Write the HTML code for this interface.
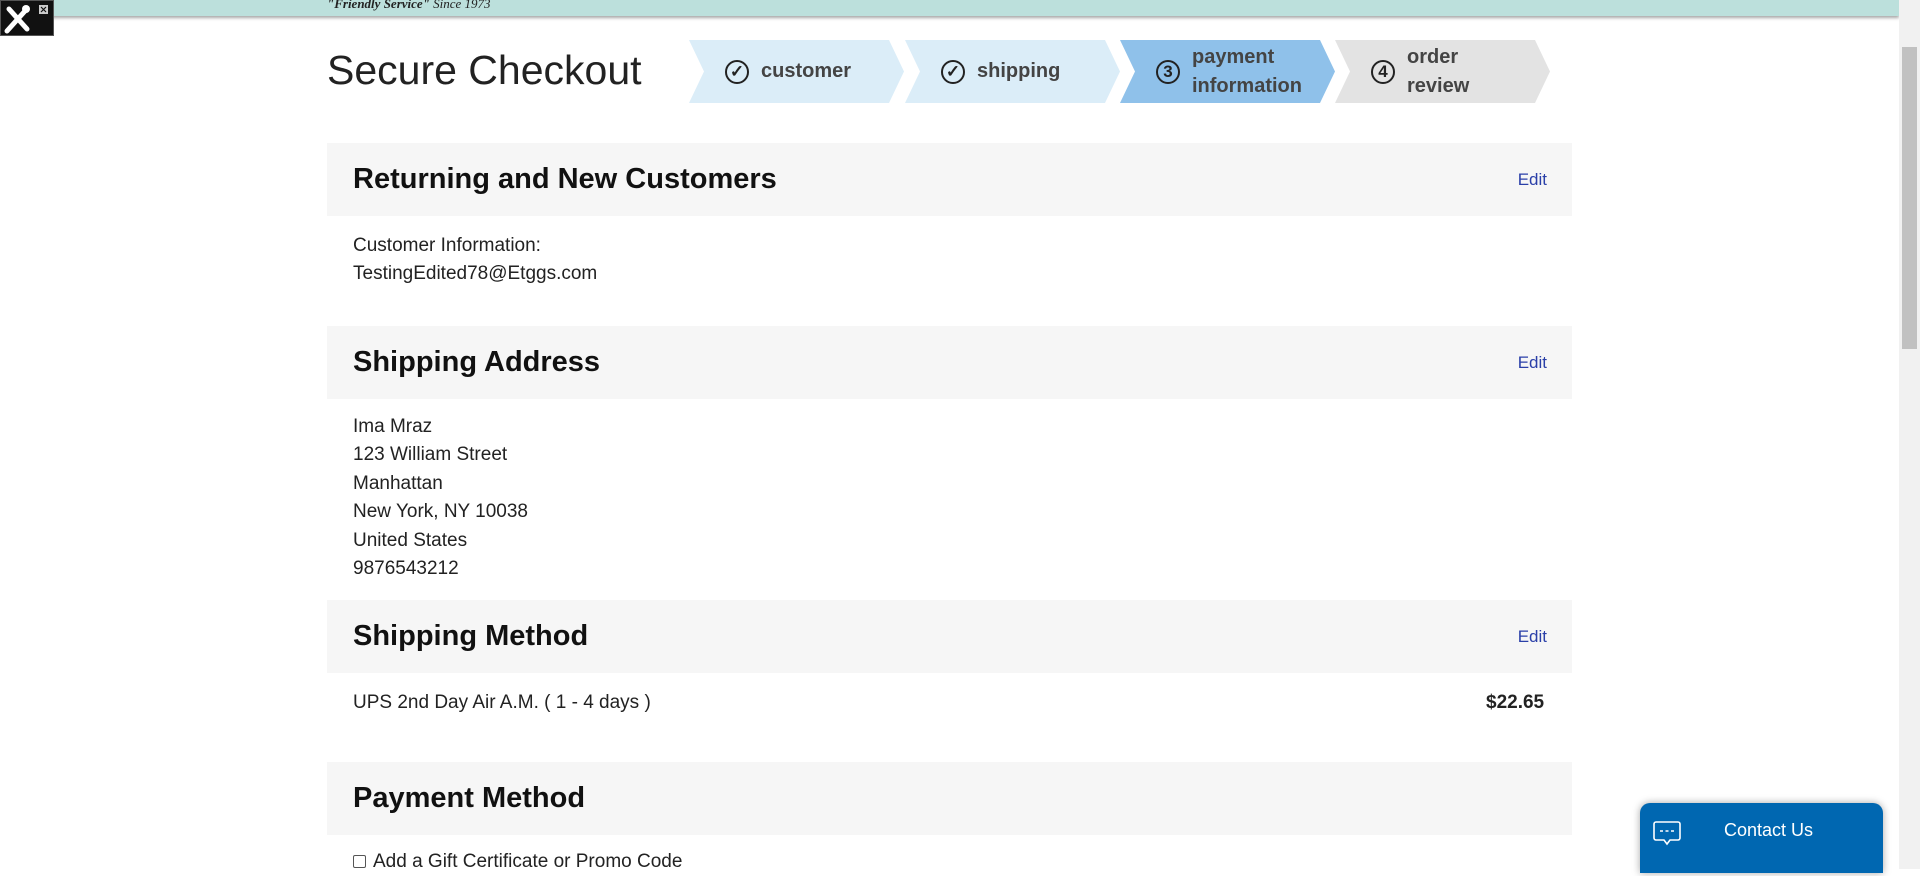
<!DOCTYPE html>
<html><head><meta charset="utf-8"><style>
*{margin:0;padding:0;box-sizing:border-box}
html,body{width:1920px;height:869px;overflow:hidden;background:#fff;font-family:"Liberation Sans",Arial,sans-serif;color:#222}
.topbar{position:absolute;left:0;top:0;width:1899px;height:16px;background:#bce0dc;box-shadow:0 2px 3px rgba(0,0,0,.35)}
.tag{position:absolute;left:327px;top:-4px;font-family:"Liberation Serif",serif;font-size:13px;font-style:italic;color:#222}
.tool{position:absolute;left:0;top:0;width:54px;height:36px;background:#111;border:1px solid #555}
.sb{position:absolute;right:0;top:0;width:21px;height:869px;background:#f1f1f1}
.thumb{position:absolute;right:3px;top:47px;width:15px;height:302px;background:#c1c1c1}
h1{position:absolute;left:327px;top:47px;font-size:41px;font-weight:normal;color:#222;letter-spacing:0}
.step{position:absolute;top:40px;height:63px;width:215px;clip-path:polygon(0 0,200px 0,215px 50%,200px 100%,0 100%,15px 50%);display:flex;align-items:center;font-weight:bold;font-size:20px;color:#444;line-height:29px}
.ic{width:24px;height:24px;border:2px solid #222;border-radius:50%;display:inline-flex;align-items:center;justify-content:center;font-size:17px;color:#222;margin-right:12px;flex:none}
.sec{position:absolute;left:327px;width:1245px;height:73px;background:#f6f6f6}
.sec h2{position:absolute;left:26px;top:20px;font-size:29px;font-weight:bold;color:#111}
.sec a{position:absolute;right:25px;top:27px;font-size:17px;color:#2a3fa8;text-decoration:none}
.txt{position:absolute;left:353px;font-size:19px;line-height:28.4px;color:#222}
.contact{position:absolute;left:1640px;top:803px;width:243px;height:70px;background:#0067b1;border-radius:10px 10px 0 0;box-shadow:0 0 8px rgba(0,0,0,.35);color:#fff;font-size:18px}
</style></head><body>
<div class="topbar"><div class="tag"><b>"Friendly Service"</b> Since 1973</div></div>
<div class="tool"><svg width="54" height="36" viewBox="0 0 54 36"><path d="M6 30 L24 10 M8 8 L26 28" stroke="#fff" stroke-width="5" stroke-linecap="round"/><circle cx="25" cy="8" r="4" fill="#fff"/><rect x="38" y="4" width="9" height="9" fill="#ccc"/><path d="M40 6l5 5M45 6l-5 5" stroke="#111" stroke-width="1.2"/></svg></div>
<div class="sb"><div class="thumb"></div></div>
<h1>Secure Checkout</h1>
<div class="step" style="left:689px;background:#dbedf8;padding-left:36px"><span class="ic">✓</span>customer</div>
<div class="step" style="left:905px;background:#dbedf8;padding-left:36px"><span class="ic">✓</span>shipping</div>
<div class="step" style="left:1120px;background:#8fc1ea;padding-left:36px"><span class="ic">3</span><span>payment<br>information</span></div>
<div class="step" style="left:1335px;background:#e3e3e3;padding-left:36px"><span class="ic">4</span><span>order<br>review</span></div>

<div class="sec" style="top:143px"><h2>Returning and New Customers</h2><a>Edit</a></div>
<div class="txt" style="top:232px">Customer Information:<br>TestingEdited78@Etggs.com</div>
<div class="sec" style="top:326px"><h2>Shipping Address</h2><a>Edit</a></div>
<div class="txt" style="top:413px">Ima Mraz<br>123 William Street<br>Manhattan<br>New York, NY 10038<br>United States<br>9876543212</div>
<div class="sec" style="top:600px"><h2>Shipping Method</h2><a>Edit</a></div>
<div class="txt" style="top:689px">UPS 2nd Day Air A.M. ( 1 - 4 days )</div>
<div class="txt" style="top:689px;left:1486px;font-weight:bold">$22.65</div>
<div class="sec" style="top:762px"><h2>Payment Method</h2></div>
<div class="txt" style="top:848px"><span style="display:inline-block;width:13px;height:13px;border:1px solid #555;border-radius:2px;margin-right:7px;vertical-align:-1px"></span>Add a Gift Certificate or Promo Code</div>
<div class="contact"><svg style="position:absolute;left:13px;top:17px" width="28" height="28" viewBox="0 0 28 28"><path d="M3 2h22a2 2 0 0 1 2 2v14a2 2 0 0 1-2 2H17l-3 4-3-4H3a2 2 0 0 1-2-2V4a2 2 0 0 1 2-2z" fill="none" stroke="#fff" stroke-width="1.6"/><path d="M7 11h3M12.5 11h3M18 11h3" stroke="#fff" stroke-width="1.6"/></svg><span style="position:absolute;left:84px;top:17px">Contact Us</span></div>
</body></html>
